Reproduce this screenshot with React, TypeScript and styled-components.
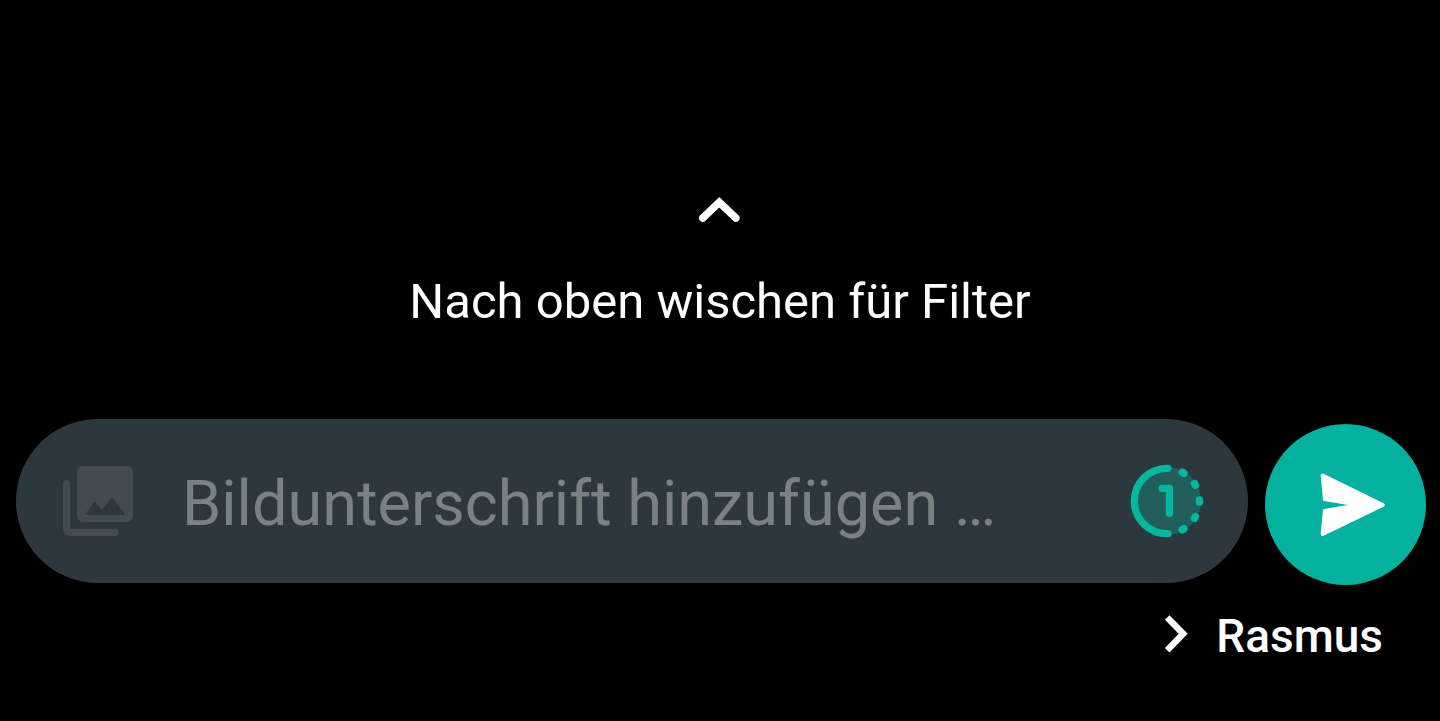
import React from "react";
import styled, { createGlobalStyle } from "styled-components";

const GlobalStyle = createGlobalStyle`
  * {
    box-sizing: border-box;
  }
  body {
    margin: 0;
    background: #000;
    font-family: Roboto, "Liberation Sans", sans-serif;
  }
`;

const Screen = styled.main`
  display: flex;
  flex-direction: column;
  min-height: 100vh;
  padding: 192px 0 48px;
  background: #000;
  color: #fff;
`;

const FilterHint = styled.button`
  display: flex;
  flex-direction: column;
  align-items: center;
  align-self: center;
  gap: 42px;
  padding: 0;
  border: 0;
  background: none;
  color: inherit;
  font: 400 49px/64px Roboto, "Liberation Sans", sans-serif;
  white-space: nowrap;
`;

const Composer = styled.form`
  display: flex;
  align-items: flex-start;
  gap: 17px;
  padding: 85px 14px 0 16px;
`;

const CaptionField = styled.div`
  display: flex;
  flex: 1;
  align-items: center;
  min-width: 0;
  height: 164px;
  padding: 0 41px 0 44px;
  border-radius: 82px;
  background: #2d383e;
`;

const CaptionInput = styled.input`
  flex: 1;
  min-width: 0;
  height: 84px;
  margin: 0 16px 0 46px;
  padding: 4px 0 0;
  border: 0;
  outline: 0;
  background: none;
  color: #fff;
  font: 400 63px/80px Roboto, "Liberation Sans", sans-serif;

  &::placeholder {
    color: #7a8185;
    opacity: 1;
  }
`;

const IconButton = styled.button`
  display: flex;
  flex: none;
  padding: 0;
  border: 0;
  background: none;
`;

const SendButton = styled(IconButton)`
  align-items: center;
  justify-content: center;
  width: 161px;
  height: 161px;
  margin-top: 5px;
  border-radius: 50%;
  background: #04b09e;
`;

const Recipient = styled.button`
  display: flex;
  align-items: center;
  align-self: flex-end;
  gap: 24px;
  margin: 21px 57px 0 0;
  padding: 0;
  border: 0;
  background: none;
  color: inherit;
  font: 500 46px/60px Roboto, "Liberation Sans", sans-serif;
`;

const ChevronUp = () => (
  <svg width="48" height="36" viewBox="0 0 48 36" fill="none" aria-hidden="true">
    <path d="M6.800 26 23.300 10.200 39.800 26" stroke="#fff" strokeWidth="7.600" strokeLinecap="round" />
  </svg>
);

const ChevronRight = () => (
  <svg width="28" height="44" viewBox="0 0 28 44" fill="none" aria-hidden="true">
    <path d="M3.200 3.500 19.200 19.800 3.200 36.200" stroke="#fff" strokeWidth="6.500" />
  </svg>
);

const GalleryIcon = () => (
  <svg width="76" height="76" viewBox="0 0 76 76" aria-hidden="true">
    <path
      d="M6.500 20.500V65a4.500 4.500 0 0 0 4.500 4.500H55.500"
      fill="none"
      stroke="#424b51"
      strokeWidth="7"
      strokeLinecap="round"
    />
    <path
      fillRule="evenodd"
      fill="#424b51"
      d="M23 3H67a6 6 0 0 1 6 6V53a6 6 0 0 1-6 6H23a6 6 0 0 1-6-6V9a6 6 0 0 1 6-6ZM26 50.300Q25 52 27 52H63.500Q65.500 52 64.500 50.300L53.200 36Q52 34.500 50.800 36L41.800 47L35.700 39.500Q34.500 38 33.300 39.700Z"
    />
  </svg>
);

const ViewOnceIcon = () => (
  <svg width="80" height="80" viewBox="0 0 80 80" fill="none" aria-hidden="true">
    <circle cx="40" cy="40" r="34" fill="#225f5c" />
    <g stroke="#04b8a0" strokeWidth="7.200" strokeLinecap="round">
      <path d="M41 7.300H40a32.700 32.700 0 0 0 0 65.400H41" />
      <path
        d="M55.300 11.200 56.900 12.200M67.500 22.700 68.400 24.300M72.500 39V41M68.400 55.700 67.500 57.300M56.900 67.800 55.300 68.800"
        strokeWidth="7.600"
      />
      <path d="M35 27.300H42.500V52.500" strokeLinejoin="round" />
    </g>
  </svg>
);

const SendIcon = () => (
  <svg width="80" height="72" viewBox="0 0 80 72" aria-hidden="true">
    <path
      d="M17.500 7 77.500 36.500 17.500 65.500 19.700 42.500 50 37.100V35.900L19.700 30.500Z"
      transform="translate(-0.800 -0.500)"
      fill="#fff"
      stroke="#fff"
      strokeWidth="4"
      strokeLinejoin="round"
    />
  </svg>
);

export default function App() {
  return (
    <>
      <GlobalStyle />
      <Screen>
        <FilterHint type="button">
          <ChevronUp />
          Nach oben wischen für Filter
        </FilterHint>
        <Composer onSubmit={(event) => event.preventDefault()}>
          <CaptionField>
            <IconButton type="button" aria-label="Galerie">
              <GalleryIcon />
            </IconButton>
            <CaptionInput
              aria-label="Bildunterschrift"
              placeholder="Bildunterschrift hinzufügen …"
            />
            <IconButton type="button" aria-label="Einmalansicht">
              <ViewOnceIcon />
            </IconButton>
          </CaptionField>
          <SendButton type="submit" aria-label="Senden">
            <SendIcon />
          </SendButton>
        </Composer>
        <Recipient type="button">
          <ChevronRight />
          Rasmus
        </Recipient>
      </Screen>
    </>
  );
}
